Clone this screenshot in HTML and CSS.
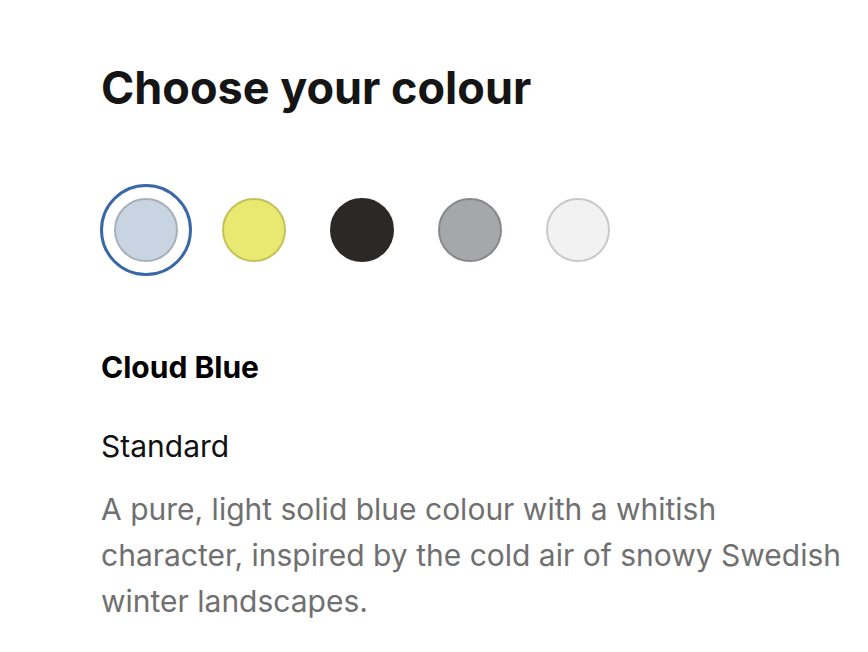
FILE: index.html
```html
<!DOCTYPE html>
<html lang="en">
<head>
    <meta charset="UTF-8">
    <meta name="viewport" content="width=device-width, initial-scale=1.0">
    <title>Choose your colour</title>
    <link rel="stylesheet" href="styles.css">
</head>
<body>
    <div class="container">
        <h1>Choose your colour</h1>

        <div class="swatches">
            <button class="swatch selected" title="Cloud Blue"><span class="dot cloud-blue"></span></button>
            <button class="swatch" title="Yellow"><span class="dot yellow"></span></button>
            <button class="swatch" title="Black"><span class="dot black"></span></button>
            <button class="swatch" title="Grey"><span class="dot grey"></span></button>
            <button class="swatch" title="White"><span class="dot white"></span></button>
        </div>

        <div class="info">
            <h2>Cloud Blue</h2>
            <p class="variant">Standard</p>
            <p class="description">A pure, light solid blue colour with a whitish character, inspired by the cold air of snowy Swedish winter landscapes.</p>
        </div>
    </div>
</body>
</html>
```

FILE: styles.css
```css
body {
    margin: 0;
    background-color: #fff;
    color: #111;
    font-family: Inter, "Noto Sans", sans-serif;
}

.container {
    padding: 56px 0 0 101px;
}

h1 {
    margin: 0;
    font-size: 45px;
    font-weight: 700;
    line-height: 64px;
    color: #151515;
}

.swatches {
    display: flex;
    gap: 16px;
    margin-top: 64px;
    margin-left: -1px;
}

.swatch {
    width: 92px;
    height: 92px;
    padding: 0;
    border: 3px solid transparent;
    border-radius: 50%;
    background: none;
    display: flex;
    align-items: center;
    justify-content: center;
    cursor: pointer;
}

.swatch.selected {
    border-color: #3a68a6;
}

.dot {
    width: 64px;
    height: 64px;
    border-radius: 50%;
    box-sizing: border-box;
    border: 2px solid;
}

.cloud-blue { background-color: #c8d4e1; border-color: #a8b0ba; }
.yellow     { background-color: #e9e971; border-color: #c3c25a; }
.black      { background-color: #2b2825; border-color: #2b2825; }
.grey       { background-color: #a6a7aa; border-color: #87888b; }
.white      { background-color: #f2f2f2; border-color: #c9c9c9; }

.info {
    margin-top: 73px;
}

.info h2 {
    margin: 0;
    font-size: 30px;
    font-weight: 700;
    line-height: 36px;
    color: #000;
}

.variant {
    margin: 43px 0 0;
    font-size: 30px;
    line-height: 36px;
    color: #111;
}

.description {
    margin: 22px 0 0;
    max-width: 760px;
    font-size: 30px;
    line-height: 46px;
    color: #707070;
}
```
